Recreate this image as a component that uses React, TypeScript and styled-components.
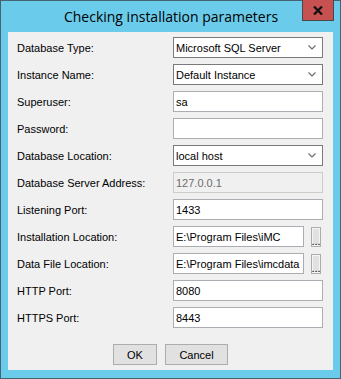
import React from "react";
import styled, { createGlobalStyle } from "styled-components";

const Global = createGlobalStyle`
  html, body { margin: 0; padding: 0; background: #ffffff; }
  #root { width: 341px; height: 379px; }
`;

const Window = styled.div`
  box-sizing: border-box;
  width: 341px;
  height: 379px;
  border: 1px solid #45646f;
  background: #6bcbeb;
  display: flex;
  flex-direction: column;
  font-family: "Liberation Sans", Arial, sans-serif;
  font-size: 11px;
  color: #000;
`;

const TitleBar = styled.div`
  position: relative;
  flex: none;
  height: 31px;
  display: flex;
  align-items: center;
  justify-content: center;
`;

const Title = styled.div`
  font-family: "Open Sans", "Noto Sans", sans-serif;
  font-size: 14px;
  color: #000;
  padding-bottom: 1px;
  padding-left: 1px;
`;

const CloseButton = styled.div`
  position: absolute;
  top: -1px;
  right: 6px;
  box-sizing: border-box;
  width: 32px;
  height: 21px;
  background: #c75050;
  border: 1px solid #47484a;
  border-top: none;
  display: flex;
  align-items: center;
  justify-content: center;
`;

const Client = styled.div`
  flex: 1;
  margin: 0 7px 8px;
  background: #f0f0f0;
  padding: 5px 10px 0 9px;
  display: flex;
  flex-direction: column;
`;

const Form = styled.div`
  display: grid;
  grid-template-columns: 156px 1fr;
  grid-auto-rows: 21px;
  row-gap: 6px;
`;

const Label = styled.div`
  align-self: center;
  white-space: nowrap;
`;

const Field = styled.div<{ $kind?: "text" | "combo" | "disabled" }>`
  box-sizing: border-box;
  height: 21px;
  display: flex;
  align-items: center;
  padding: 0 6px 0 2px;
  white-space: nowrap;
  overflow: hidden;
  background: ${(p) => (p.$kind === "disabled" ? "#f0f0f0" : "#ffffff")};
  border: 1px solid
    ${(p) =>
      p.$kind === "combo" ? "#7a7a7a" : p.$kind === "disabled" ? "#cccccc" : "#abadb3"};
  color: ${(p) => (p.$kind === "disabled" ? "#6d6d6d" : "#000")};
`;

const FieldText = styled.span`
  flex: 1;
`;

const PathRow = styled.div`
  display: flex;
  align-items: center;
  gap: 7px;
`;

const PathField = styled(Field)`
  width: 131px;
  flex: none;
`;

const BrowseButton = styled.div`
  box-sizing: border-box;
  width: 10px;
  height: 20px;
  border: 1px solid #adadad;
  background: #e1e1e1;
  box-shadow: inset 0 0 0 1px #f4f4f4;
  display: flex;
  align-items: flex-end;
  justify-content: center;
  overflow: hidden;
  line-height: 7px;
  font-size: 11px;
  padding-bottom: 1px;
`;

const ButtonRow = styled.div`
  display: flex;
  justify-content: center;
  gap: 8px;
  margin-top: 16px;
  padding-left: 1px;
`;

const Button = styled.div<{ $w: number }>`
  box-sizing: border-box;
  width: ${(p) => p.$w}px;
  height: 21px;
  border: 1px solid #adadad;
  background: #e1e1e1;
  display: flex;
  align-items: center;
  justify-content: center;
`;

const Chevron = () => (
  <svg width="8" height="5" viewBox="0 0 8 5">
    <polyline points="0.5,0.5 4,4 7.5,0.5" fill="none" stroke="#6d6d6d" strokeWidth="1.2" />
  </svg>
);

const CloseGlyph = () => (
  <svg width="10" height="9" viewBox="0 0 10 9">
    <path d="M1,0.5 L9,8.5 M9,0.5 L1,8.5" stroke="#111" strokeWidth="2.3" />
  </svg>
);

type Row = {
  label: string;
  kind: "combo" | "text" | "disabled" | "path";
  value: string;
};

const rows: Row[] = [
  { label: "Database Type:", kind: "combo", value: "Microsoft SQL Server" },
  { label: "Instance Name:", kind: "combo", value: "Default Instance" },
  { label: "Superuser:", kind: "text", value: "sa" },
  { label: "Password:", kind: "text", value: "" },
  { label: "Database Location:", kind: "combo", value: "local host" },
  { label: "Database Server Address:", kind: "disabled", value: "127.0.0.1" },
  { label: "Listening Port:", kind: "text", value: "1433" },
  { label: "Installation Location:", kind: "path", value: "E:\\Program Files\\iMC" },
  { label: "Data File Location:", kind: "path", value: "E:\\Program Files\\imcdata" },
  { label: "HTTP Port:", kind: "text", value: "8080" },
  { label: "HTTPS Port:", kind: "text", value: "8443" },
];

export default function App() {
  return (
    <>
      <Global />
      <Window>
        <TitleBar>
          <Title>Checking installation parameters</Title>
          <CloseButton>
            <CloseGlyph />
          </CloseButton>
        </TitleBar>
        <Client>
          <Form>
            {rows.map((r) => (
              <React.Fragment key={r.label}>
                <Label>{r.label}</Label>
                {r.kind === "path" ? (
                  <PathRow>
                    <PathField $kind="text">
                      <FieldText>{r.value}</FieldText>
                    </PathField>
                    <BrowseButton>...</BrowseButton>
                  </PathRow>
                ) : (
                  <Field $kind={r.kind}>
                    <FieldText>{r.value}</FieldText>
                    {r.kind === "combo" && <Chevron />}
                  </Field>
                )}
              </React.Fragment>
            ))}
          </Form>
          <ButtonRow>
            <Button $w={44}>OK</Button>
            <Button $w={63}>Cancel</Button>
          </ButtonRow>
        </Client>
      </Window>
    </>
  );
}
